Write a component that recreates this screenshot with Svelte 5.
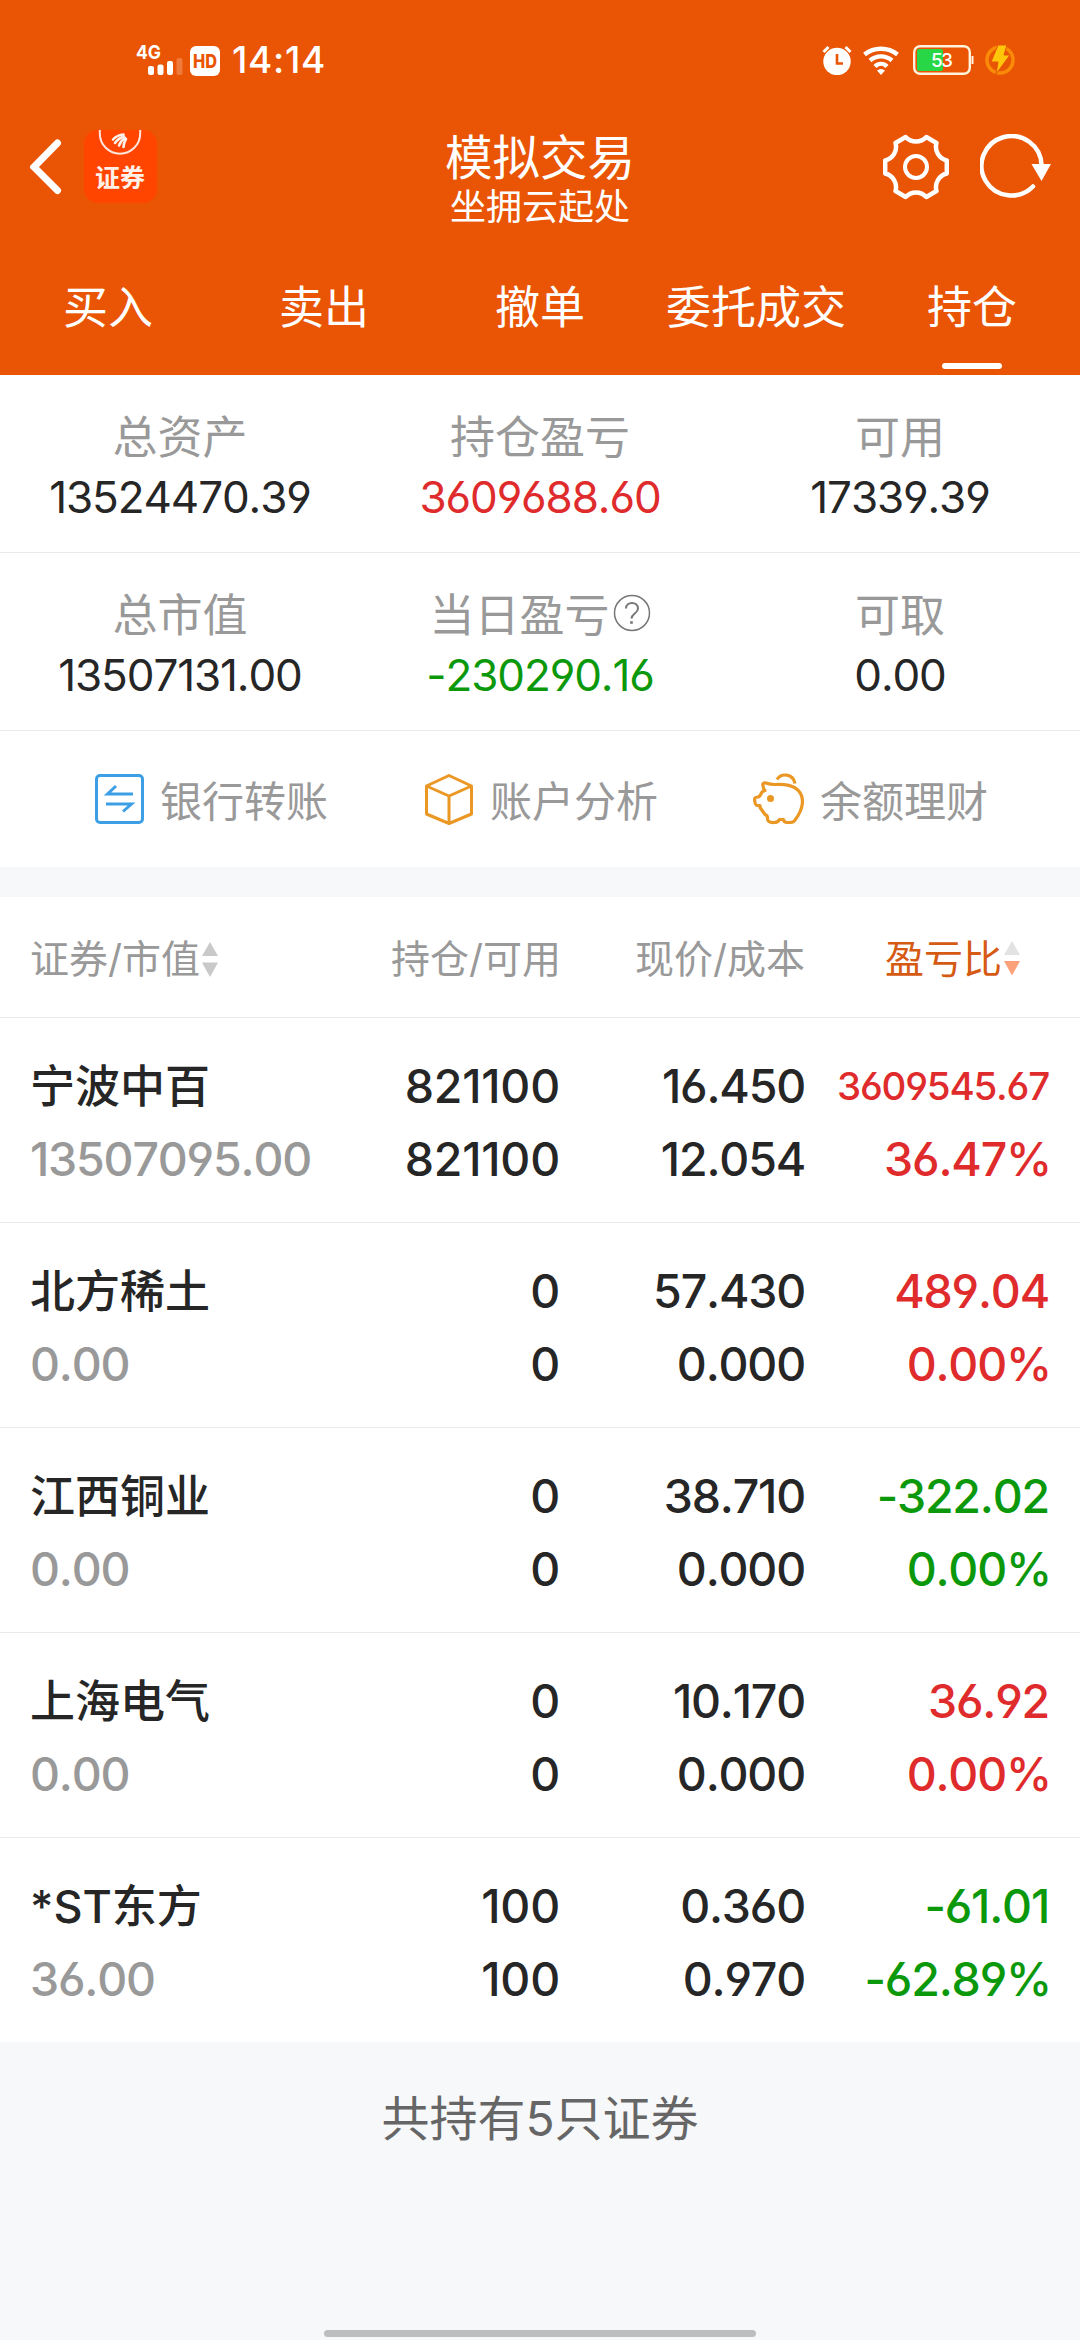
<script>
    let activeTab = '持仓';

    const tabs = ['买入', '卖出', '撤单', '委托成交', '持仓'];

    const summary = [
        [
            { label: '总资产', value: '13524470.39' },
            { label: '持仓盈亏', value: '3609688.60', trend: 'up' },
            { label: '可用', value: '17339.39' }
        ],
        [
            { label: '总市值', value: '13507131.00' },
            { label: '当日盈亏', value: '-230290.16', trend: 'down', help: true },
            { label: '可取', value: '0.00' }
        ]
    ];

    const holdings = [
        { name: '宁波中百', market: '13507095.00', held: '821100', usable: '821100', price: '16.450', cost: '12.054', profit: '3609545.67', ratio: '36.47%', trend: 'up' },
        { name: '北方稀土', market: '0.00', held: '0', usable: '0', price: '57.430', cost: '0.000', profit: '489.04', ratio: '0.00%', trend: 'up' },
        { name: '江西铜业', market: '0.00', held: '0', usable: '0', price: '38.710', cost: '0.000', profit: '-322.02', ratio: '0.00%', trend: 'down' },
        { name: '上海电气', market: '0.00', held: '0', usable: '0', price: '10.170', cost: '0.000', profit: '36.92', ratio: '0.00%', trend: 'up' },
        { name: '*ST东方', market: '36.00', held: '100', usable: '100', price: '0.360', cost: '0.970', profit: '-61.01', ratio: '-62.89%', trend: 'down' }
    ];
</script>

<main class="page">
    <header>
        <div class="status">
            <div class="status-left">
                <svg width="84" height="36" viewBox="0 -4 84 36">
                    <text x="0" y="15" font-size="19" font-weight="700" fill="#fff" textLength="25" lengthAdjust="spacingAndGlyphs">4G</text>
                    <g fill="#fff">
                        <rect x="12" y="22" width="6" height="9" rx="2" />
                        <rect x="21.500" y="20.500" width="6" height="10.500" rx="2" />
                        <rect x="31" y="17" width="6" height="14" rx="2" />
                        <rect x="40.500" y="14" width="6" height="17" rx="2" opacity=".22" />
                        <rect x="54" y="2" width="30" height="30" rx="6" />
                    </g>
                    <text x="57" y="24" font-size="18.500" font-weight="800" fill="#e95504" textLength="24" lengthAdjust="spacingAndGlyphs">HD</text>
                </svg>
                <span class="clock">14:14</span>
            </div>
            <div class="status-right">
                <svg width="30" height="30" viewBox="0 0 30 30">
                    <circle cx="15" cy="16.500" r="13.700" fill="#fff" />
                    <path d="M1.500 7 6.500 2M28.500 7 23.500 2" stroke="#fff" stroke-width="3" fill="none" />
                    <path d="M15 9v9.500h6" stroke="#e95504" stroke-width="2.600" fill="none" />
                </svg>
                <svg width="36" height="30" viewBox="0 0 36 30">
                    <g fill="none" stroke="#fff" stroke-width="4.400">
                        <path d="M1.500 9.500C11 1.800 25 1.800 34.500 9.500" />
                        <path d="M7 15.500C13.500 10 22.500 10 29 15.500" />
                        <path d="M12 21.500C15.500 18 20.500 18 24 21.500" />
                    </g>
                    <path d="M14 25.500q4-3 8 0l-4 4.500z" fill="#fff" />
                </svg>
                <svg width="61" height="30" viewBox="0 0 61 30">
                    <rect x="1.200" y="1.200" width="55.600" height="27.600" rx="6" fill="none" stroke="#fff3dd" stroke-width="2.400" />
                    <rect x="4" y="4" width="26" height="22" rx="2" fill="#28d745" />
                    <path d="M59.500 11v8" stroke="#fff3dd" stroke-width="2" />
                    <text x="18" y="22" font-size="19" font-weight="500" fill="#fff" textLength="22">53</text>
                </svg>
                <svg width="30" height="30" viewBox="0 0 30 30">
                    <circle cx="15" cy="15" r="13" fill="none" stroke="#f98b08" stroke-width="3.500" />
                    <path d="M13 0h9l-3 10h6L11 29l2-12H6z" fill="#ffc60a" stroke="#e95504" stroke-width="1" />
                </svg>
            </div>
        </div>

        <div class="nav">
            <div class="side">
                <svg class="back" width="32" height="56" viewBox="0 0 32 56">
                    <path d="M27.500 4 4 28l23.500 23.500" fill="none" stroke="#fff" stroke-width="7" stroke-linecap="round" />
                </svg>
                <svg width="73" height="73" viewBox="0 0 73 73">
                    <rect width="73" height="73" rx="14" fill="#ff4500" />
                    <path d="M15.800 0v3.500a20.200 20.200 0 0 0 40.400 0V0" fill="none" stroke="#ffe6dc" stroke-width="2" />
                    <g fill="none" stroke="#fff0ea" stroke-width="2.600" stroke-linecap="round">
                        <path d="M29 9.500Q33 5 39.500 4.500" />
                        <path d="M31 13Q34 8.500 40 6.500" />
                        <path d="M35 15.500Q36.500 11 41 8" />
                        <path d="M39.500 17Q39.500 13 42 9" />
                    </g>
                    <text x="11" y="57" font-size="25" font-weight="700" fill="#fff0ea">证券</text>
                </svg>
            </div>
            <div class="title">
                <h1>模拟交易</h1>
                <p>坐拥云起处</p>
            </div>
            <div class="side right">
                <svg width="66" height="66" viewBox="-33 -33 66 66">
                    <path
                        d="M-10.300-30A14 14 0 0 0 10.300-30L20.500-24A14 14 0 0 0 30.800-6.500V6.500A14 14 0 0 0 20.500 24L10.300 30A14 14 0 0 0-10.300 30L-20.500 24A14 14 0 0 0-30.800 6.500V-6.500A14 14 0 0 0-20.500-24z"
                        fill="none" stroke="#fff" stroke-width="4.500" stroke-linejoin="round"
                    />
                    <circle r="11" fill="none" stroke="#fff" stroke-width="4" />
                </svg>
                <svg width="72" height="66" viewBox="0 0 72 66">
                    <path d="M53 52.500A30 29.700 0 1 1 61.500 31" fill="none" stroke="#fff" stroke-width="4.500" stroke-linecap="round" />
                    <path d="M51.500 30h19.500l-9.500 17z" fill="#fff" />
                </svg>
            </div>
        </div>

        <nav class="tabs">
            {#each tabs as tab}
                <button class="tab" class:active={tab === activeTab} on:click={() => (activeTab = tab)}>{tab}</button>
            {/each}
        </nav>
    </header>

    {#each summary as row}
        <section class="summary">
            {#each row as item}
                <div class="cell">
                    <div class="label">
                        {item.label}
                        {#if item.help}
                            <svg width="38" height="38" viewBox="0 0 38 38" fill="none" stroke="#777">
                                <circle cx="19" cy="19" r="17.500" stroke-width="1.500" />
                                <path d="M13 14.500c0-7.500 12-7.500 12 0 0 5-6.500 5-6.500 10" stroke-width="2" />
                                <path d="M18.500 27.200v2.600" stroke-width="2.600" />
                            </svg>
                        {/if}
                    </div>
                    <div class="value {item.trend || ''}">{item.value}</div>
                </div>
            {/each}
        </section>
    {/each}

    <section class="actions">
        <div class="action">
            <svg width="49" height="50" viewBox="0 0 49 50" fill="none" stroke="#3c9fe6" stroke-width="3">
                <rect x="1.500" y="1.500" width="46" height="47" rx="3.500" />
                <path d="M38 20H12.500l8.500-8M11 30h25.500L28 37.500" />
            </svg>
            <span>银行转账</span>
        </div>
        <div class="action">
            <svg width="50" height="51" viewBox="-1 0 50 51" fill="none" stroke="#eb9724" stroke-width="3" stroke-linejoin="round">
                <path d="M24 1.500 46.500 12v28L24 49.500 1.500 40V12zM1.500 12 24 22l22.500-10M24 22v27.500" />
            </svg>
            <span>账户分析</span>
        </div>
        <div class="action">
            <svg width="51" height="52" viewBox="0 0 51 52" fill="none" stroke="#eb9724" stroke-width="3.200" stroke-linejoin="round">
                <path d="M10 12.500Q9 9.500 13 10Q17 11.500 22 11.500C40 10 49.500 17 49.500 29Q49 38 42 47Q41 49.500 37 49.500H34Q31 49.500 30.500 46.500H26.500Q25 49.500 21 49.500Q14 50 14.500 44.500Q14.500 42.500 12 41.500L7 34.500V32.500H4Q2 32 1.500 26Q2 24 5.500 24L7.500 22Q9 18 12 17.500Q10 15.500 10 12.500z" />
                <path d="M24 6.500C28 0 40 0 42 10.500" />
                <circle cx="17.500" cy="25.500" r="3.500" fill="#eb9724" stroke="none" />
            </svg>
            <span>余额理财</span>
        </div>
    </section>

    <section class="holdings">
        <div class="row head">
            <div class="first">
                证券/市值
                <svg width="16" height="36" viewBox="0 0 16 36" fill="#c9c9c9">
                    <path d="M8 1l8 14H0zM8 36l8-14.500H0z" />
                </svg>
            </div>
            <div>持仓/可用</div>
            <div>现价/成本</div>
            <div class="sorted">
                盈亏比
                <svg width="16" height="36" viewBox="0 0 16 36">
                    <path d="M8 0l8 14H0z" fill="#e2e2e2" />
                    <path d="M8 34.500l8-14.500H0z" fill="#fba27a" />
                </svg>
            </div>
        </div>
        {#each holdings as stock}
            <div class="row">
                <div class="first">
                    <p class="name">{stock.name}</p>
                    <p class="market">{stock.market}</p>
                </div>
                <div class="amount">
                    <p>{stock.held}</p>
                    <p>{stock.usable}</p>
                </div>
                <div>
                    <p>{stock.price}</p>
                    <p>{stock.cost}</p>
                </div>
                <div class={stock.trend}>
                    <p class:small={stock.profit.length > 8}>{stock.profit}</p>
                    <p class="ratio">{stock.ratio}</p>
                </div>
            </div>
        {/each}
    </section>

    <footer>共持有5只证券</footer>
    <div class="home-bar"></div>
</main>

<style>
    :global(body) {
        margin: 0;
        background: #f7f8fa;
    }
    .page {
        display: flex;
        flex-direction: column;
        width: 1080px;
        height: 2340px;
        overflow: hidden;
        background: #f7f8fa;
        color: #262626;
        font-family: Inter, "Noto Sans CJK SC", sans-serif;
        font-feature-settings: "cv03", "cv04";
        font-kerning: none;
    }
    svg {
        display: block;
        flex: none;
    }
    h1, p {
        margin: 0;
        font-weight: inherit;
    }

    /** Header **/
    header {
        height: 375px;
        background: #e95504;
        color: #fff;
    }
    .status {
        display: flex;
        justify-content: space-between;
        align-items: center;
        height: 120px;
        padding: 0 65px 0 136px;
    }
    .status-left {
        display: flex;
        align-items: center;
        gap: 12px;
    }
    .status-left svg {
        margin-bottom: 4px;
        overflow: visible;
    }
    .clock {
        font-size: 37px;
        font-weight: 500;
        line-height: 40px;
        letter-spacing: 0.7px;
    }
    .status-right {
        display: flex;
        align-items: center;
    }
    .status-right svg:nth-child(2) {
        margin: 0 14px 0 11px;
    }
    .status-right svg:nth-child(4) {
        margin-left: 11px;
    }
    .nav {
        display: grid;
        grid-template-columns: 1fr auto 1fr;
        height: 120px;
    }
    .side {
        display: flex;
        align-items: center;
        height: 93px;
        padding-left: 30px;
        gap: 22px;
    }
    .side.right {
        justify-content: flex-end;
        padding: 0 28px 0 0;
        gap: 31px;
    }
    .title {
        padding-top: 11px;
        text-align: center;
    }
    .title h1 {
        font-size: 47.5px;
        line-height: 53px;
    }
    .title p {
        font-size: 36px;
        line-height: 47px;
    }
    .tabs {
        display: grid;
        grid-template-columns: repeat(5, 1fr);
    }
    .tab {
        padding: 38px 0 0;
        border: none;
        background: none;
        color: inherit;
        font-family: inherit;
        font-size: 45px;
        line-height: 60px;
    }
    .tab::after {
        content: "";
        display: block;
        width: 60px;
        height: 6px;
        margin: 25px auto 0;
        border-radius: 3px;
    }
    .tab.active::after {
        background: #fff;
    }

    /** Account summary **/
    .summary {
        display: grid;
        grid-template-columns: repeat(3, 1fr);
        height: 144px;
        padding-top: 33px;
        border-bottom: 1px solid #ebebeb;
        background: #fff;
        text-align: center;
    }
    .label {
        display: flex;
        justify-content: center;
        align-items: center;
        gap: 3px;
        color: #999;
        font-size: 45px;
        line-height: 60px;
    }
    .label svg {
        margin-bottom: 6px;
    }
    .value {
        font-size: 44px;
        line-height: 58px;
        letter-spacing: -1.1px;
    }
    .up {
        color: #e02b2c;
    }
    .down {
        color: #0b980b;
    }

    /** Shortcuts **/
    .actions {
        display: grid;
        grid-template-columns: repeat(3, 329px);
        height: 136px;
        margin-bottom: 30px;
        padding-left: 95px;
        background: #fff;
    }
    .action {
        display: flex;
        align-items: center;
        gap: 16px;
        color: #999;
        font-size: 42px;
        line-height: 60px;
    }
    .action span {
        padding-top: 5px;
    }

    /** Holdings table **/
    .row {
        display: grid;
        grid-template-columns: 287px 244px 244px 244px;
        height: 172px;
        padding: 32px 31px 0 30px;
        border-bottom: 1px solid #ebebeb;
        background: #fff;
        font-size: 46.5px;
        font-weight: 500;
        line-height: 73px;
        letter-spacing: -1.2px;
        text-align: right;
        white-space: nowrap;
    }
    .row:last-child {
        border-bottom: none;
    }
    .row.head {
        align-items: center;
        height: 117px;
        padding: 3px 31px 0 30px;
        color: #999;
        font-size: 39px;
        font-weight: 400;
        letter-spacing: 0;
    }
    .first {
        text-align: left;
    }
    .head .first,
    .head .sorted {
        display: flex;
        align-items: center;
        gap: 2px;
    }
    .head .sorted {
        justify-content: flex-end;
        padding-right: 29px;
        color: #d55a14;
    }
    .name {
        font-size: 45px;
        letter-spacing: 0;
    }
    .market {
        color: #999;
    }
    .amount {
        padding-right: 1px;
        letter-spacing: -0.2px;
    }
    .small {
        font-size: 38.5px;
    }
    .ratio {
        margin-right: -2px;
    }

    footer {
        color: #666;
        font-size: 48px;
        line-height: 154px;
        text-align: center;
    }
    .home-bar {
        width: 432px;
        height: 7px;
        margin: auto auto 3px;
        border-radius: 4px;
        background: #bdbebf;
    }
</style>
